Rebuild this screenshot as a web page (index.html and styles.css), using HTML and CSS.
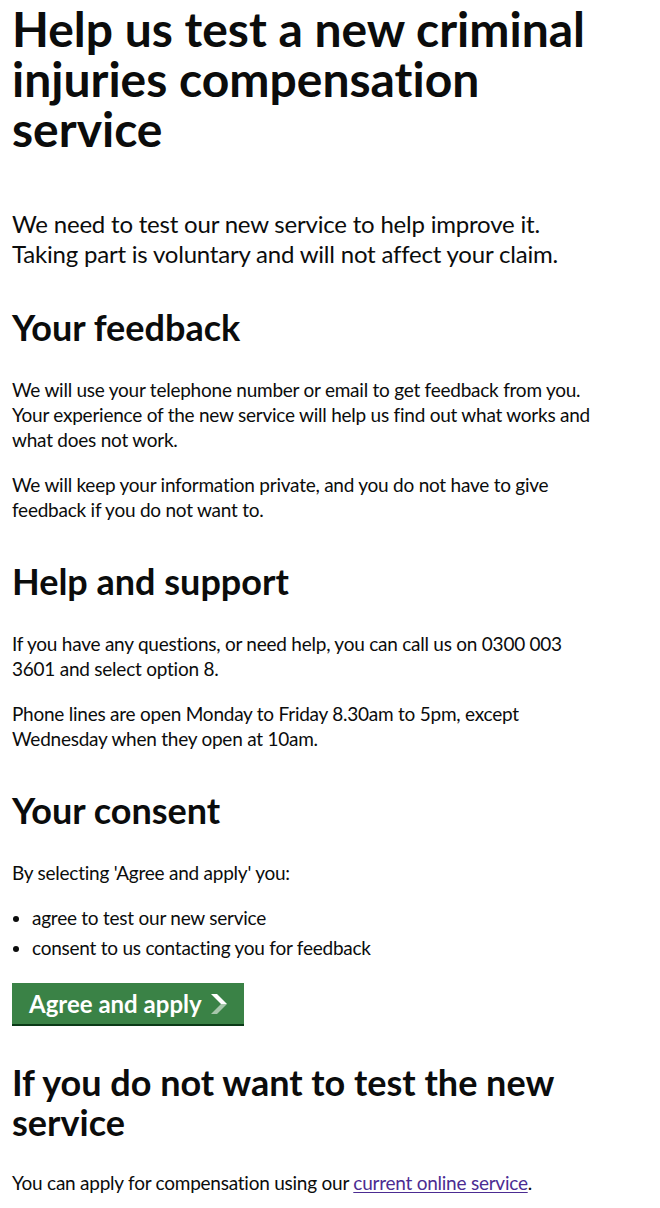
FILE: index.html
```html
<!DOCTYPE html>
<html lang="en">
<head>
<meta charset="utf-8">
<title>Help us test a new criminal injuries compensation service</title>
<link rel="stylesheet" href="styles.css">
</head>
<body>
<main class="page">
  <h1 class="heading-xl">Help us test a new criminal injuries compensation service</h1>
  <p class="body-l">We need to test our new service to help improve it.<br>Taking part is voluntary and will not affect your claim.</p>

  <h2 class="heading-l">Your feedback</h2>
  <p class="body">We will use your telephone number or email to get feedback from you. Your experience of the new service will help us find out what works and what does not work.</p>
  <p class="body">We will keep your information private, and you do not have to give feedback if you do not want to.</p>

  <h2 class="heading-l">Help and support</h2>
  <p class="body">If you have any questions, or need help, you can call us on 0300 003 3601 and select option 8.</p>
  <p class="body">Phone lines are open Monday to Friday 8.30am to 5pm, except Wednesday when they open at 10am.</p>

  <h2 class="heading-l">Your consent</h2>
  <p class="body">By selecting 'Agree and apply' you:</p>
  <ul class="list">
    <li>agree to test our new service</li>
    <li>consent to us contacting you for feedback</li>
  </ul>
  <a class="start-button" href="#">Agree and apply
    <svg class="start-icon" width="17" height="20" viewBox="0 0 17 20" aria-hidden="true">
      <polygon points="0,0 6,0 16,10 10,10" fill="#ffffff"/>
      <polygon points="10,10 16,10 6,20 0,20" fill="#ffffff" fill-opacity="0.55"/>
    </svg>
  </a>

  <h2 class="heading-l heading-after-button">If you do not want to test the new service</h2>
  <p class="body">You can apply for compensation using our <a class="link" href="#">current online service</a>.</p>
</main>
</body>
</html>
```

FILE: styles.css
```css
html, body {
  margin: 0;
  padding: 0;
  background: #ffffff;
}

.page {
  width: 594px;
  padding: 4px 12px 0;
  color: #0b0c0c;
  font-family: Lato, "Liberation Sans", Arial, sans-serif;
  font-variant-ligatures: none;
}

.heading-xl {
  margin: 0 0 55px;
  font-size: 48px;
  line-height: 50px;
  font-weight: 700;
}

.body-l {
  margin: 0 0 19px;
  font-size: 24px;
  line-height: 30px;
  letter-spacing: -0.2px;
}

.heading-l {
  margin: 0 0 30px;
  padding-top: 19px;
  font-size: 36px;
  line-height: 40px;
  font-weight: 700;
}

.body {
  margin: 0 0 20px;
  font-size: 19px;
  line-height: 25px;
  letter-spacing: -0.24px;
}

.list {
  margin: 0 0 23px;
  padding-left: 20px;
  font-size: 19px;
  line-height: 25px;
  letter-spacing: -0.24px;
}

.list li {
  margin-bottom: 5px;
}

.start-button {
  display: inline-flex;
  align-items: center;
  gap: 9px;
  box-sizing: border-box;
  height: 41px;
  padding: 0 16px 0 17px;
  background: #3a8246;
  color: #ffffff;
  font-size: 24px;
  font-weight: 700;
  line-height: 1;
  text-decoration: none;
  box-shadow: 0 2px 0 #0b3a17;
}

.start-icon {
  flex: none;
}

.heading-after-button {
  margin-top: 19px;
  margin-bottom: 28px;
}

.link {
  color: #4c2c92;
  text-decoration: underline;
  text-underline-offset: 2px;
}
```
